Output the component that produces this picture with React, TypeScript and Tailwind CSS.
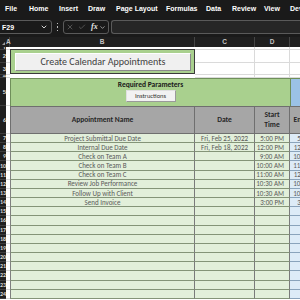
import { Fragment } from "react";
import { Check, ChevronDown, X } from "lucide-react";

const COLS = "grid grid-cols-[6px_4px_185px_60px_35px_36px]";

const menu = [
	{ label: "File", w: "w-[24px]" },
	{ label: "Home", w: "w-[30px]" },
	{ label: "Insert", w: "w-[29px]" },
	{ label: "Draw", w: "w-[28px]" },
	{ label: "Page Layout", w: "w-[50px]" },
	{ label: "Formulas", w: "w-[40px]" },
	{ label: "Data", w: "w-[26px]" },
	{ label: "Review", w: "w-[32px]" },
	{ label: "View", w: "w-[26px]" },
	{ label: "Developer", w: "w-[50px]" },
];

const appointments = [
	["Project Submittal Due Date", "Fri, Feb 25, 2022", "5:00 PM", "5:30 PM"],
	["Internal Due Date", "Fri, Feb 18, 2022", "12:00 PM", "12:30 PM"],
	["Check on Team A", "", "9:00 AM", "10:00 AM"],
	["Check on Team B", "", "10:00 AM", "11:00 AM"],
	["Check on Team C", "", "11:00 AM", "12:00 PM"],
	["Review Job Performance", "", "10:30 AM", "10:45 AM"],
	["Follow Up with Client", "", "10:30 AM", "10:45 AM"],
	["Send Invoice", "", "3:00 PM", "3:30 PM"],
];

const rows = [
	...appointments,
	...Array.from({ length: 10 }, () => ["", "", "", ""]),
];

function RowHeader({ n, className = "" }: { n: number; className?: string }) {
	return (
		<div
			className={`flex items-center justify-end overflow-hidden border-b border-[#3c3c3c] bg-[#1f1f1f] text-[6px] font-bold leading-none text-[#d8d8d8] ${className}`}
		>
			{n}
		</div>
	);
}

function MenuBar() {
	return (
		<div className="flex h-[17px] items-center bg-[#1a1a1a] pl-[5px] text-[7px] font-bold leading-none text-white">
			{menu.map((m) => (
				<span key={m.label} className={`shrink-0 whitespace-nowrap ${m.w}`}>
					{m.label}
				</span>
			))}
		</div>
	);
}

function FormulaBar() {
	return (
		<div className="flex h-[20px] items-center bg-[#1a1a1a]">
			<div className="-ml-[4px] flex h-[14px] w-[56px] shrink-0 items-center justify-between rounded-[3px] border border-[#5a5a5a] pl-[5px] pr-[3px] text-[7px] font-bold leading-none text-white">
				<span>F29</span>
				<ChevronDown size={8} strokeWidth={3} className="text-[#d0d0d0]" />
			</div>
			<div className="flex w-[11px] shrink-0 flex-col items-center gap-[2px]">
				<span className="h-[1.5px] w-[1.5px] bg-[#bdbdbd]" />
				<span className="h-[1.5px] w-[1.5px] bg-[#bdbdbd]" />
				<span className="h-[1.5px] w-[1.5px] bg-[#bdbdbd]" />
			</div>
			<div className="flex h-[14px] w-[46px] shrink-0 items-center rounded-[3px] border border-[#5a5a5a] pl-[2px]">
				<X size={8} strokeWidth={2} className="text-[#6e6e6e]" />
				<Check size={8} strokeWidth={2} className="ml-[4px] text-[#6e6e6e]" />
				<span className="ml-[5px] font-['Liberation_Serif',serif] text-[8px] font-bold italic leading-none text-[#e6e6e6]">
					fx
				</span>
				<ChevronDown size={7} strokeWidth={2.5} className="ml-[1px] text-[#bdbdbd]" />
			</div>
			<div className="ml-[2px] h-[14px] flex-1 rounded-l-[3px] border border-r-0 border-[#5a5a5a] bg-[#262626]" />
		</div>
	);
}

function ColumnHeaders() {
	return (
		<div className={`${COLS} h-[10px] bg-[#1f1f1f] text-[6.5px] font-bold leading-none text-[#c4c4c4]`}>
			<div className="flex items-end justify-end pb-[2px] pr-[1px]">
				<span className="h-0 w-0 rotate-90 border-l-[3px] border-t-[3px] border-l-transparent border-t-[#9a9a9a]" />
			</div>
			<div className="flex items-center justify-start border-r border-[#444]">A</div>
			<div className="flex items-center justify-center border-r border-[#444]">B</div>
			<div className="flex items-center justify-center border-r border-[#444]">C</div>
			<div className="flex items-center justify-center border-r border-[#444]">D</div>
			<div className="flex items-center justify-center">E</div>
		</div>
	);
}

function TopArea() {
	const heights = [1, 2, 3, 4];
	return (
		<div className={`${COLS} grid-rows-[3px_13px_12px_3px]`}>
			<div className="col-start-3 row-span-4 row-start-1 pb-[4px] pt-[2px]">
				<div className="h-full border border-[#3a3a3a] bg-[#a9d08e] pb-[2px] pl-[4px] pr-[3px] pt-[3px]">
					<div className="flex h-full items-center justify-center border border-b-[#8a8a8a] border-l-[#ffffff] border-r-[#8a8a8a] border-t-[#ffffff] bg-[#f0f0f0] font-['Carlito','Lato',sans-serif] text-[10px] leading-none text-[#404040]">
						Create Calendar Appointments
					</div>
				</div>
			</div>
			{heights.map((n) => (
				<Fragment key={n}>
					<RowHeader n={n} className="col-start-1" />
					<div className="col-start-2 border-b border-[#dadada]" />
					<div className="col-start-4 border-b border-r border-[#dadada]" />
					<div className="col-start-5 border-b border-r border-[#dadada]" />
					<div className="col-start-6 border-b border-[#dadada]" />
				</Fragment>
			))}
		</div>
	);
}

function SectionHeaders() {
	return (
		<>
			<div className={`${COLS} h-[28px]`}>
				<RowHeader n={5} />
				<div className="border-b border-[#dadada]" />
				<div className="col-span-3 flex flex-col items-center border-l border-t border-[#6f8f5a] bg-[#a9d08e] pt-[1px]">
					<span className="font-['Carlito','Lato',sans-serif] text-[7.5px] font-bold leading-[9px] text-[#1a1a1a]">
						Required Parameters
					</span>
					<div className="mt-[1px] flex h-[12px] w-[50px] items-center justify-center border border-b-[#9a9a9a] border-l-[#e0e0e0] border-r-[#9a9a9a] border-t-[#e0e0e0] bg-[#f2f2f2] font-['Carlito','Lato',sans-serif] text-[6.5px] leading-none text-[#333]">
						Instructions
					</div>
				</div>
				<div className="border-l border-t border-[#6f8f5a] bg-[#9bc2e6]" />
			</div>
			<div className={`${COLS} h-[28px] font-['Carlito','Lato',sans-serif] text-[7.5px] font-bold leading-[10px] text-[#262626]`}>
				<RowHeader n={6} />
				<div className="border-b border-[#dadada]" />
				<div className="flex items-center justify-center border-b border-l border-r border-t border-[#6f6f6f] bg-[#a6a6a6]">
					Appointment Name
				</div>
				<div className="flex items-center justify-center border-b border-r border-t border-[#6f6f6f] bg-[#a6a6a6]">
					Date
				</div>
				<div className="flex items-center justify-center border-b border-r border-t border-[#6f6f6f] bg-[#a6a6a6] text-center">
					Start
					<br />
					Time
				</div>
				<div className="flex items-center justify-center whitespace-nowrap border-b border-t border-[#6f6f6f] bg-[#a6a6a6]">
					End Time
				</div>
			</div>
		</>
	);
}

function DataRows() {
	return (
		<div className="font-['Carlito','Lato',sans-serif] text-[7px] leading-none text-[#595959]">
			{rows.map((r, i) => (
				<div key={i} className={`${COLS} h-[9.17px]`}>
					<RowHeader n={i + 7} />
					<div className="border-b border-[#dadada]" />
					<div className="flex items-center justify-center whitespace-nowrap border-b border-l border-r border-b-[#849478] border-l-[#7f7f7f] border-r-[#7a7a7a] bg-[#e2efda]">
						{r[0]}
					</div>
					<div className="flex items-center justify-end whitespace-nowrap border-b border-r border-b-[#849478] border-r-[#7a7a7a] bg-[#e2efda] pr-[6px]">
						{r[1]}
					</div>
					<div className="flex items-center justify-end whitespace-nowrap border-b border-r border-b-[#849478] border-r-[#7a7a7a] bg-[#e2efda] pr-[5px]">
						{r[2]}
					</div>
					<div className="flex items-center justify-end whitespace-nowrap border-b border-b-[#8aa3bb] bg-[#ddebf7] pr-[5px]">
						{r[3]}
					</div>
				</div>
			))}
		</div>
	);
}

export default function App() {
	return (
		<div className="h-[300px] w-[300px] overflow-hidden bg-white font-['Liberation_Sans',sans-serif]">
			<MenuBar />
			<FormulaBar />
			<div className="w-[326px]">
				<ColumnHeaders />
				<TopArea />
				<SectionHeaders />
				<DataRows />
			</div>
		</div>
	);
}
